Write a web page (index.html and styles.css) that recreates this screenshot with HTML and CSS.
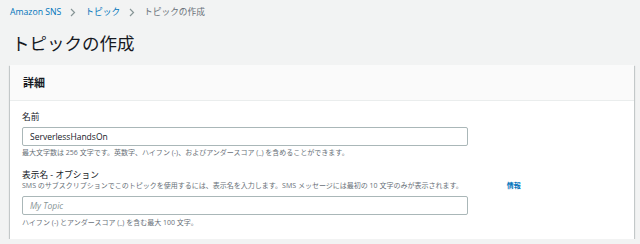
FILE: index.html
```html
<!DOCTYPE html>
<html lang="ja">
<head>
<meta charset="utf-8">
<link rel="stylesheet" href="styles.css">
</head>
<body>
<nav class="breadcrumb">
  <a class="crumb-link">Amazon SNS</a>
  <svg class="chev" width="6" height="9" viewBox="0 0 6 9"><path d="M1 1l3.5 3.5L1 8" fill="none" stroke="#879596" stroke-width="1.2"/></svg>
  <a class="crumb-link">トピック</a>
  <svg class="chev" width="6" height="9" viewBox="0 0 6 9"><path d="M1 1l3.5 3.5L1 8" fill="none" stroke="#879596" stroke-width="1.2"/></svg>
  <span class="crumb-current">トピックの作成</span>
</nav>
<h1 class="title">トピックの作成</h1>
<section class="card">
  <div class="card-header">詳細</div>
  <div class="card-body">
    <div class="field">
      <label class="label">名前</label>
      <div class="input">ServerlessHandsOn</div>
      <div class="help">最大文字数は 256 文字です。英数字、ハイフン (-)、およびアンダースコア (_) を含めることができます。</div>
    </div>
    <div class="field field2">
      <label class="label">表示名 - <span class="opt">オプション</span></label>
      <div class="desc">SMS のサブスクリプションでこのトピックを使用するには、表示名を入力します。SMS メッセージには最初の 10 文字のみが表示されます。<a class="info">情報</a></div>
      <div class="input placeholder">My Topic</div>
      <div class="help">ハイフン (-) とアンダースコア (_) を含む最大 100 文字。</div>
    </div>
  </div>
</section>
</body>
</html>
```
FILE: styles.css
```css
html, body {
  margin: 0;
  padding: 0;
  background: #f2f3f3;
}
body {
  padding: 0 6px 0 10px;
  font-family: "Open Sans", "Noto Sans CJK JP", sans-serif;
  color: #16191f;
}
.breadcrumb {
  display: flex;
  align-items: center;
  gap: 9px;
  padding-top: 6px;
  height: 12px;
  line-height: 12px;
  font-size: 8.7px;
}
.crumb-link {
  color: #0073bb;
}
.crumb-current {
  color: #687078;
}
.title {
  margin: 14px 0 11px 2px;
  font-size: 17.5px;
  line-height: 22px;
  font-weight: 400;
  color: #16191f;
}
.card {
  background: #fff;
  box-shadow: 0 1px 1px 0 rgba(0,28,36,.3), 1px 1px 1px 0 rgba(0,28,36,.15), -1px 1px 1px 0 rgba(0,28,36,.15);
}
.card-header {
  height: 35px;
  line-height: 35px;
  padding: 0 13px;
  background: #fafafa;
  border-bottom: 1px solid #eaeded;
  font-size: 11px;
  font-weight: 700;
  color: #16191f;
}
.card-body {
  padding: 10px 12px 11px;
  display: flex;
  flex-direction: column;
}
.field {
  display: flex;
  flex-direction: column;
}
.field2 {
  margin-top: 11px;
}
.label {
  font-size: 8.7px;
  line-height: 12px;
  color: #16191f;
}
.desc {
  font-size: 7px;
  line-height: 10px;
  color: #687078;
}
.info {
  color: #0073bb;
  font-weight: 700;
  margin-left: 44px;
}
.input {
  box-sizing: border-box;
  width: 446px;
  height: 19px;
  margin-top: 4px;
  border: 1px solid #aab7b8;
  border-radius: 2px;
  padding: 0 7px;
  font-size: 8.5px;
  line-height: 17px;
  color: #16191f;
  background: #fff;
}
.field2 .input {
  margin-top: 5px;
}
.placeholder {
  color: #879596;
  font-style: italic;
}
.help {
  margin-top: 2px;
  font-size: 7px;
  line-height: 10px;
  color: #687078;
}
.field2 .help {
  margin-top: 3px;
}
```
